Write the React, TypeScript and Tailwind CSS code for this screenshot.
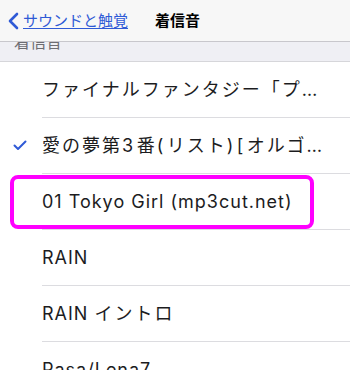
import React from "react";

const rows: { text: string; checked?: boolean; highlight?: boolean }[] = [
  { text: "ファイナルファンタジー「プレリュード」" },
  { text: "愛の夢第3番(リスト)[オルゴール]", checked: true },
  { text: "01 Tokyo Girl (mp3cut.net)", highlight: true },
  { text: "RAIN" },
  { text: "RAIN イントロ" },
  { text: "Pasa/Lena7" },
];

const CJK = /[\u3000-\u30ff\u4e00-\u9fff\uff00-\uffef]/;

function Segmented({ text }: { text: string }) {
  const parts = text.match(/[\u3000-\u30ff\u4e00-\u9fff\uff00-\uffef]+|[^\u3000-\u30ff\u4e00-\u9fff\uff00-\uffef]+/g) || [];
  const hasCjk = CJK.test(text);
  return (
    <>
      {parts.map((p, i) => {
        if (CJK.test(p)) return <span key={i} className="tracking-[2px]">{p}</span>;
        if (hasCjk && !/[A-Za-z]/.test(p)) return <span key={i} className="tracking-[3.5px]">{p}</span>;
        return <span key={i} className="tracking-[1px]">{p}</span>;
      })}
    </>
  );
}

export default function App() {
  return (
    <div
      className="w-[350px] h-[370px] overflow-hidden bg-white"
      style={{ fontFamily: '"Inter", "Noto Sans CJK JP", sans-serif' }}
    >
      <div className="h-[42px] bg-[#f7f7f7] border-b border-[#c8c7cc] flex items-center">
        <svg width="14" height="18" viewBox="0 0 14 18" className="ml-[6px] mt-[1px]">
          <path d="M11 2 L4 9 L11 16" fill="none" stroke="#2f5ad6" strokeWidth="2.6" strokeLinecap="round" strokeLinejoin="round" />
        </svg>
        <span className="ml-[3px] text-[15px] text-[#2f5ad6] underline underline-offset-2 leading-none">サウンドと触覚</span>
        <span className="ml-[27px] text-[15px] font-bold text-black leading-none">着信音</span>
      </div>
      <div className="h-[20px] bg-[#efeff4] border-b border-[#d6d6da] overflow-hidden">
        <div className="ml-[14px] -mt-[8px] text-[16px] leading-none text-[#6d6d72]">着信音</div>
      </div>
      {rows.map((r, i) => (
        <div key={i} className="relative flex h-[56px]">
          <div className="w-[42px] flex items-center justify-center">
            {r.checked && (
              <svg width="14" height="11" viewBox="0 0 14 11" className="-ml-[2px] -mt-[2px]">
                <path d="M1.5 5.5 L5 9 L12.5 1.5" fill="none" stroke="#2f5ad6" strokeWidth="2" strokeLinecap="round" strokeLinejoin="round" />
              </svg>
            )}
          </div>
          <div className="flex-1 min-w-0 flex items-center border-b border-[#dcdce0] pr-[15px]">
            <span className="truncate text-[18px] text-[#1c1c1e]">
              <Segmented text={r.text} />
            </span>
          </div>
          {r.highlight && (
            <div className="absolute left-[10px] top-[1px] w-[304px] h-[54px] border-[4px] border-[#ff00ff] rounded-[8px]" />
          )}
        </div>
      ))}
    </div>
  );
}
